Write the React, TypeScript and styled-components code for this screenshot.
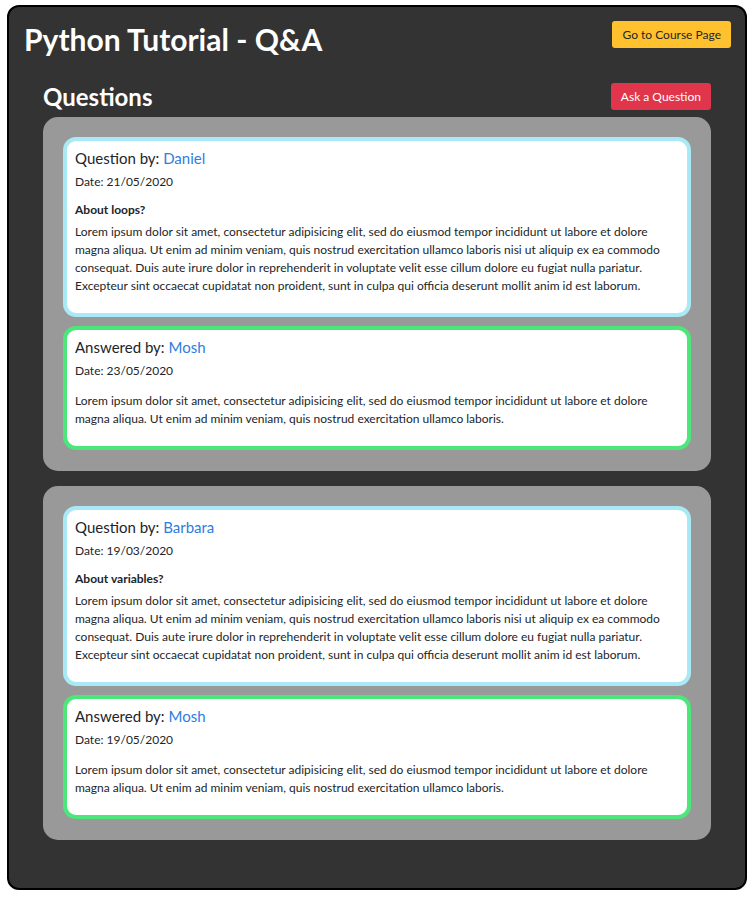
import React from "react";
import styled, { createGlobalStyle } from "styled-components";

const GlobalStyle = createGlobalStyle`
  html, body { margin: 0; padding: 0; background: #ffffff; }
  body { font-family: "Lato", "Liberation Sans", sans-serif; color: #212529; }
  * { box-sizing: border-box; }
`;

const Frame = styled.div`
  margin: 5px 7px 9px 7px;
  background: #333333;
  border: 2px solid #000000;
  border-radius: 12px;
  padding: 14px 14px 48px 15px;
`;

const HeaderRow = styled.div`
  display: flex;
  justify-content: space-between;
  align-items: flex-start;
`;

const Title = styled.h1`
  margin: 0;
  font-size: 30px;
  line-height: 36px;
  font-weight: 700;
  color: #ffffff;
`;

const Button = styled.button<{ $variant: "warning" | "danger" }>`
  font-family: "Lato", "Liberation Sans", sans-serif;
  font-size: 12px;
  line-height: 18px;
  height: 27px;
  padding: 0 10px;
  border: none;
  border-radius: 3px;
  cursor: pointer;
  background: ${(p) => (p.$variant === "warning" ? "#ffc22e" : "#e0354a")};
  color: ${(p) => (p.$variant === "warning" ? "#212529" : "#ffffff")};
`;

const Section = styled.section`
  margin: 26px 20px 0 19px;
`;

const SectionHead = styled.div`
  display: flex;
  justify-content: space-between;
  align-items: flex-end;
  margin-bottom: 7px;
`;

const SectionTitle = styled.h3`
  margin: 0;
  font-size: 24px;
  line-height: 27px;
  font-weight: 700;
  color: #ffffff;
`;

const Thread = styled.div`
  background: #999999;
  border-radius: 15px;
  padding: 20px 20px 21px 20px;
  display: flex;
  flex-direction: column;
  gap: 9px;
  & + & {
    margin-top: 15px;
  }
`;

const Card = styled.div<{ $kind: "question" | "answer" }>`
  background: #ffffff;
  border: 4px solid ${(p) => (p.$kind === "question" ? "#a8e9f5" : "#4ce67a")};
  border-radius: 13px;
  padding: 8px;
`;

const CardHeading = styled.h5`
  margin: 0 0 6px 0;
  font-size: 15px;
  line-height: 18px;
  font-weight: 400;
  color: #212529;
`;

const Name = styled.span`
  color: #2d7ee0;
`;

const DateLine = styled.p`
  margin: 0 0 12px 0;
  font-size: 12px;
  line-height: 18px;
`;

const Subject = styled.h6`
  margin: 0 0 6px 0;
  font-size: 12px;
  line-height: 14px;
  font-weight: 700;
`;

const Body = styled.p`
  margin: 0 0 10px 0;
  font-size: 12px;
  line-height: 18px;
`;

const questionText =
  "Lorem ipsum dolor sit amet, consectetur adipisicing elit, sed do eiusmod tempor incididunt ut labore et dolore magna aliqua. Ut enim ad minim veniam, quis nostrud exercitation ullamco laboris nisi ut aliquip ex ea commodo consequat. Duis aute irure dolor in reprehenderit in voluptate velit esse cillum dolore eu fugiat nulla pariatur. Excepteur sint occaecat cupidatat non proident, sunt in culpa qui officia deserunt mollit anim id est laborum.";

const answerText =
  "Lorem ipsum dolor sit amet, consectetur adipisicing elit, sed do eiusmod tempor incididunt ut labore et dolore magna aliqua. Ut enim ad minim veniam, quis nostrud exercitation ullamco laboris.";

type ThreadData = {
  asker: string;
  askDate: string;
  subject: string;
  answerer: string;
  answerDate: string;
};

const threads: ThreadData[] = [
  { asker: "Daniel", askDate: "21/05/2020", subject: "About loops?", answerer: "Mosh", answerDate: "23/05/2020" },
  { asker: "Barbara", askDate: "19/03/2020", subject: "About variables?", answerer: "Mosh", answerDate: "19/05/2020" },
];

export default function App() {
  return (
    <>
      <GlobalStyle />
      <Frame>
        <HeaderRow>
          <Title>Python Tutorial - Q&amp;A</Title>
          <Button $variant="warning">Go to Course Page</Button>
        </HeaderRow>
        <Section>
          <SectionHead>
            <SectionTitle>Questions</SectionTitle>
            <Button $variant="danger">Ask a Question</Button>
          </SectionHead>
          {threads.map((t) => (
            <Thread key={t.asker}>
              <Card $kind="question">
                <CardHeading>
                  Question by: <Name>{t.asker}</Name>
                </CardHeading>
                <DateLine>Date: {t.askDate}</DateLine>
                <Subject>{t.subject}</Subject>
                <Body>{questionText}</Body>
              </Card>
              <Card $kind="answer">
                <CardHeading>
                  Answered by: <Name>{t.answerer}</Name>
                </CardHeading>
                <DateLine>Date: {t.answerDate}</DateLine>
                <Body>{answerText}</Body>
              </Card>
            </Thread>
          ))}
        </Section>
      </Frame>
    </>
  );
}
